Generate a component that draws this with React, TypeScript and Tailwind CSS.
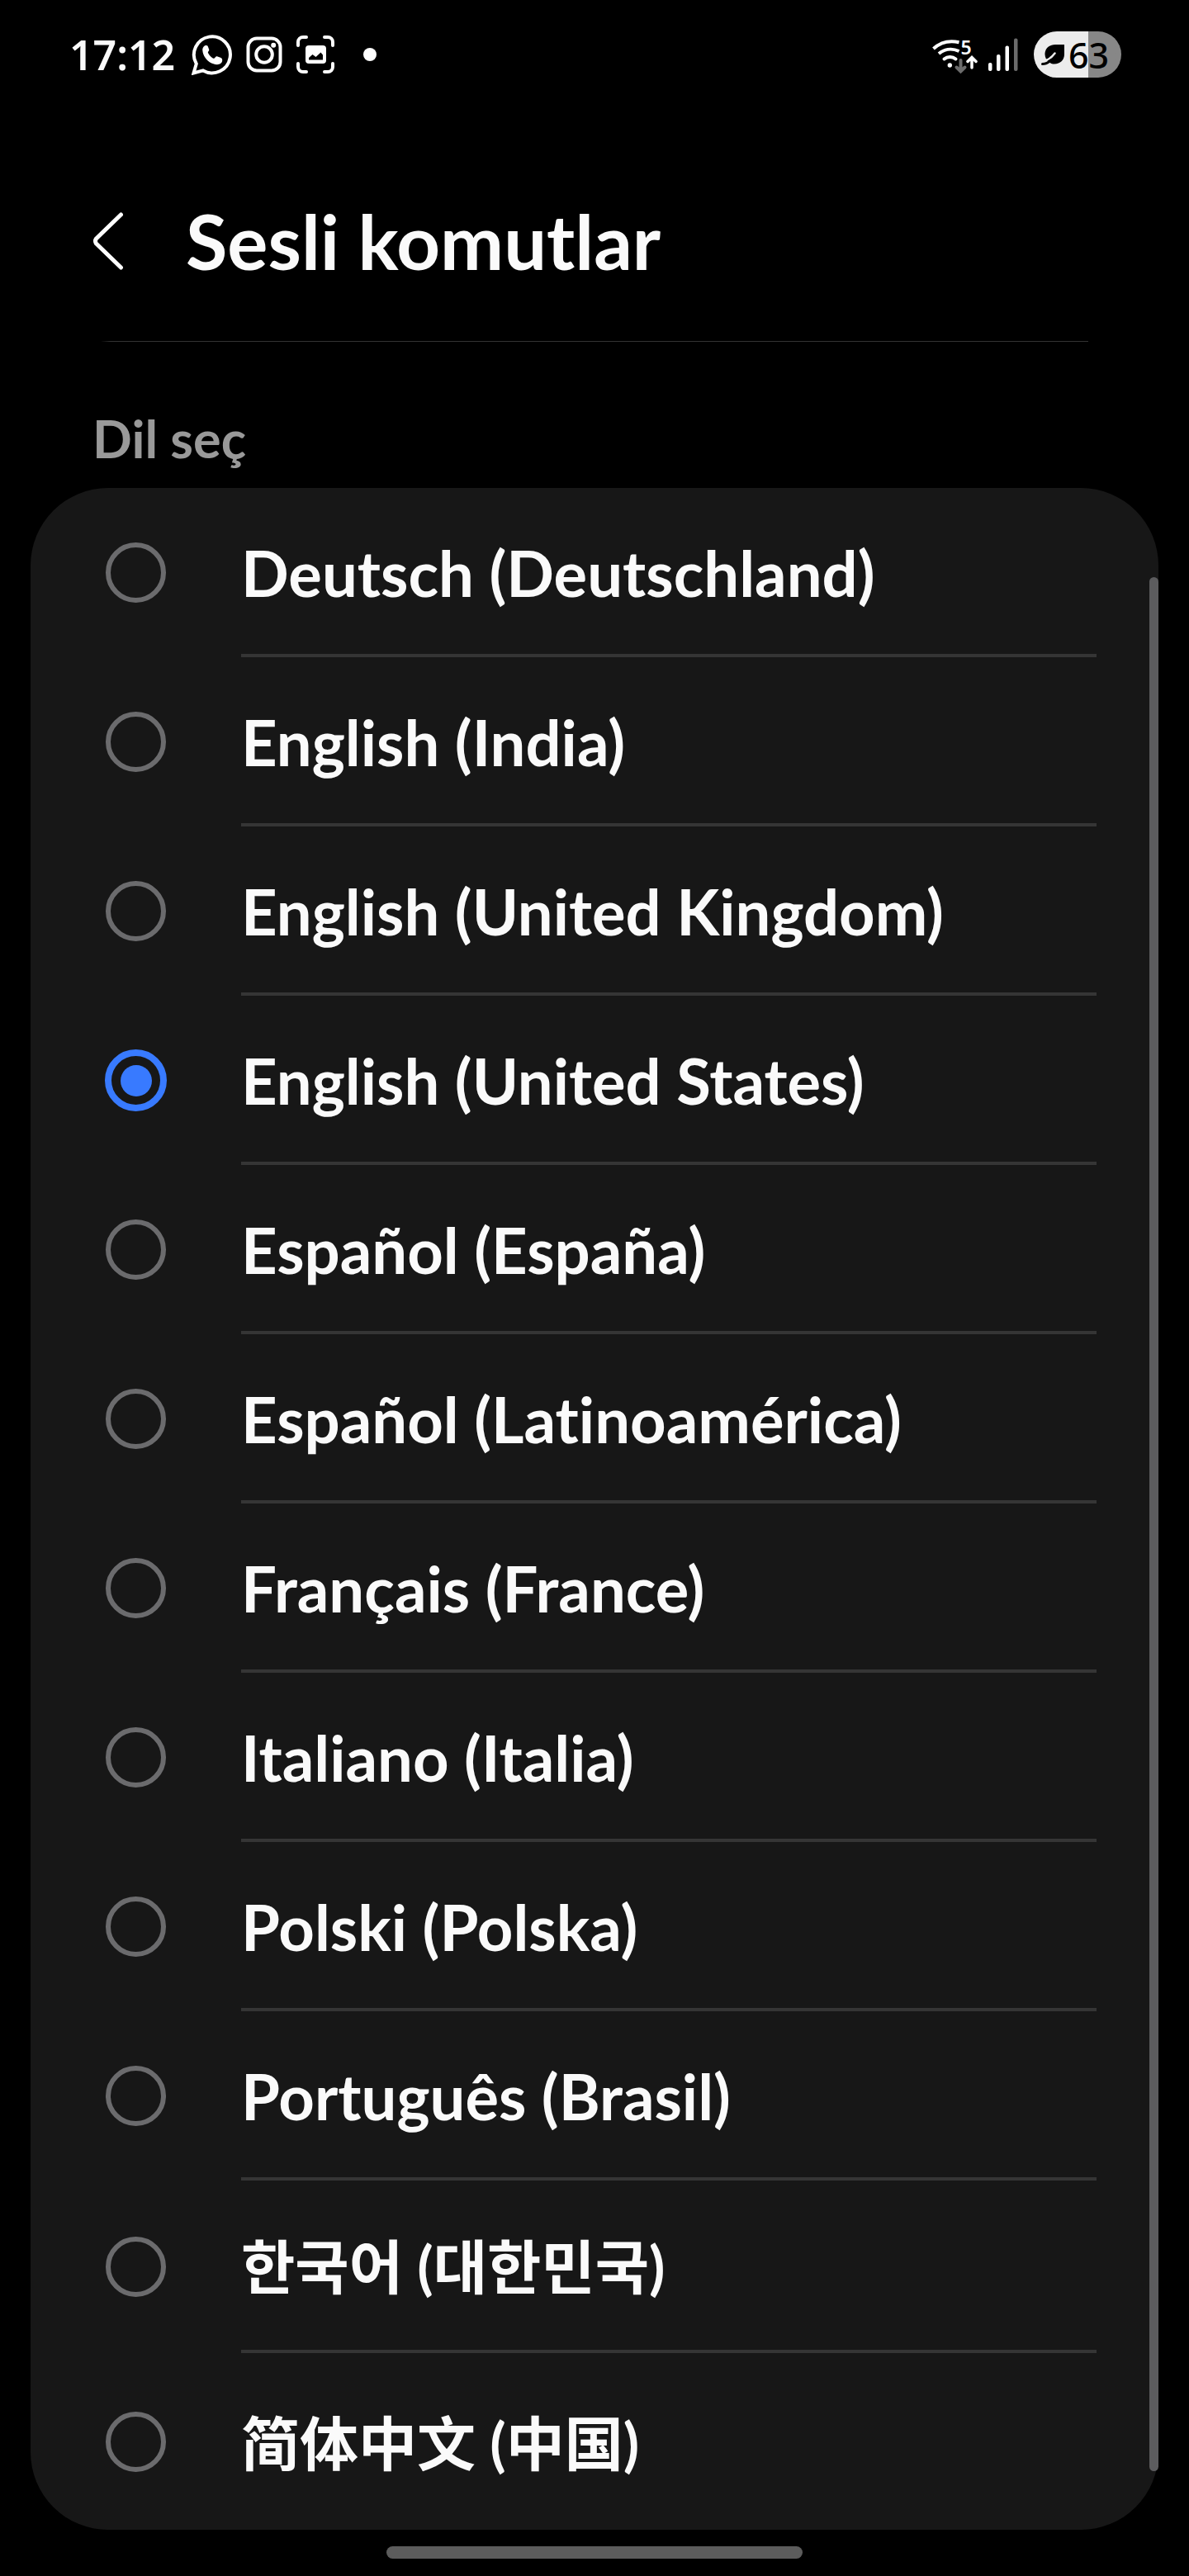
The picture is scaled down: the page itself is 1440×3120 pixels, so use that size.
import { useState } from 'react';
import clsx from 'clsx';

interface Language {
  code: string;
  label: string;
  labelClass: string;
  rowClass: string;
}

const latin = "text-[76px] font-['Lato',sans-serif]";
const row = 'h-[205px]';

const languages: Language[] = [
  { code: 'de-DE', label: 'Deutsch (Deutschland)', labelClass: latin, rowClass: row },
  { code: 'en-IN', label: 'English (India)', labelClass: latin, rowClass: row },
  { code: 'en-GB', label: 'English (United Kingdom)', labelClass: latin, rowClass: row },
  { code: 'en-US', label: 'English (United States)', labelClass: latin, rowClass: row },
  { code: 'es-ES', label: 'Español (España)', labelClass: latin, rowClass: row },
  { code: 'es-419', label: 'Español (Latinoamérica)', labelClass: latin, rowClass: row },
  { code: 'fr-FR', label: 'Français (France)', labelClass: latin, rowClass: row },
  { code: 'it-IT', label: 'Italiano (Italia)', labelClass: latin, rowClass: row },
  { code: 'pl-PL', label: 'Polski (Polska)', labelClass: latin, rowClass: row },
  { code: 'pt-BR', label: 'Português (Brasil)', labelClass: latin, rowClass: row },
  {
    code: 'ko-KR',
    label: '한국어 (대한민국)',
    labelClass: "text-[71px] font-['Lato','Noto_Sans_CJK_KR',sans-serif]",
    rowClass: 'h-[209px]',
  },
  {
    code: 'zh-CN',
    label: '简体中文 (中国)',
    labelClass: "text-[71px] font-['Lato','Noto_Sans_CJK_SC',sans-serif]",
    rowClass: 'h-[214px]',
  },
];

function WhatsAppIcon() {
  return (
    <svg viewBox="0 0 50 50" className="size-[50px]" fill="none">
      <path
        d="M2.5 47.5 L5.8 36.2 A22 22 0 1 1 14 44.4 Z"
        stroke="white"
        strokeWidth="4"
        strokeLinejoin="miter"
      />
      <path
        d="M17.5 14 C15 14 13 17 13.3 20 C14 29 22 37 31 37.2 C34 37.2 37.2 35.4 37.2 32 C37.2 30 36.6 29.6 35 28.8 L31.5 27.4 C30 26.8 29.4 27.4 28.4 28.8 C27.6 30 27 30 25.8 29.4 C23.4 28 21.4 26 20.2 23.6 C19.6 22.6 19.8 22 20.6 21 C21.4 20 21.4 19.4 21 18.4 L19.8 15.2 C19.2 14 18.6 14 17.5 14 Z"
        fill="white"
      />
    </svg>
  );
}

function InstagramIcon() {
  return (
    <svg viewBox="0 0 44 44" className="size-[44px]" fill="none" stroke="white" strokeWidth="4">
      <rect x="2.5" y="2.5" width="39" height="39" rx="10.5" />
      <circle cx="22" cy="22" r="9.8" />
      <circle cx="33.2" cy="10.8" r="3" fill="white" stroke="none" />
    </svg>
  );
}

function CaptureIcon() {
  return (
    <svg viewBox="0 0 48 48" className="size-[48px]" fill="none">
      <path
        d="M3 13 V9 A6 6 0 0 1 9 3 H13 M35 3 H39 A6 6 0 0 1 45 9 V13 M45 35 V39 A6 6 0 0 1 39 45 H35 M13 45 H9 A6 6 0 0 1 3 39 V35"
        stroke="white"
        strokeWidth="4"
        strokeLinecap="round"
      />
      <rect x="12" y="13" width="25" height="22" rx="4" fill="white" />
      <path d="M16 30.5 V28 L20.5 24 L24.5 27 L30.5 21.5 L33 24.5 V30.5 Z" fill="black" />
    </svg>
  );
}

function WifiIcon() {
  return (
    <svg viewBox="0 0 56 52" className="h-[52px] w-[56px]" fill="none" strokeWidth="4">
      <path d="M2.5 19 C10 12 21 8.5 33.5 11.2 M9 25 C15 20 24 17.5 33.5 22" stroke="white" />
      <path d="M15.5 31.5 C19.5 28 25.5 28 29.5 31.5" stroke="white" strokeLinecap="round" />
      <circle cx="22.3" cy="39" r="2.7" fill="white" />
      <text
        x="35.5"
        y="26"
        fill="white"
        className="text-[23px] font-semibold font-['Noto_Sans',sans-serif]"
      >
        5
      </text>
      <path d="M35.5 33 V46 M30.5 41.5 L35.5 46.5 L40.5 41.5" stroke="#6b6b6b" strokeLinecap="round" />
      <path
        d="M49 42 V30 M44 34.5 L49 29.5 L54 34.5"
        stroke="white"
        strokeWidth="3.5"
        strokeLinecap="round"
      />
    </svg>
  );
}

function SignalIcon() {
  return (
    <svg viewBox="0 0 38 52" className="h-[52px] w-[38px]">
      <rect x="1" y="36" width="4.5" height="10" rx="2" fill="white" />
      <rect x="11" y="26" width="4.5" height="20" rx="2" fill="white" />
      <rect x="21.5" y="15.5" width="4.5" height="30.5" rx="2" fill="white" />
      <rect x="32" y="6.5" width="4.5" height="39.5" rx="2" fill="#6b6b6b" />
    </svg>
  );
}

function LeafIcon() {
  return (
    <svg viewBox="0 0 30 28" className="h-[28px] w-[30px]" fill="none" strokeLinecap="round">
      <path
        d="M29 2 H18 C10.5 2 5.5 7 5.5 13.5 C5.5 17 7 20 9 22 C11 24 14 25.5 17 25.5 C24 25.5 29 20.5 29 14 Z"
        fill="black"
      />
      <path d="M5 21.5 Q12 20 17.5 12.5" stroke="#ececec" strokeWidth="2.5" />
      <path d="M2.5 25.5 Q8 25.5 12.5 21" stroke="black" strokeWidth="3" />
    </svg>
  );
}

function StatusBar() {
  return (
    <div className="flex h-[132px] items-center justify-between pl-[84px] pr-[82px]">
      <div className="flex items-center">
        <time className="text-[50px] leading-none font-semibold font-['Noto_Sans',sans-serif]">17:12</time>
        <div className="ml-5 flex items-center gap-4">
          <WhatsAppIcon />
          <InstagramIcon />
          <CaptureIcon />
        </div>
        <span className="ml-[34px] size-4 rounded-full bg-white" />
      </div>
      <div className="flex items-center">
        <WifiIcon />
        <div className="ml-3">
          <SignalIcon />
        </div>
        <div className="ml-[18px] flex h-[56px] w-[106px] items-center gap-1 rounded-full bg-linear-to-r from-[#ececec] from-[66px] to-[#878787] to-[66px] pl-2">
          <LeafIcon />
          <span className="text-[43px] leading-none font-medium text-black font-['Noto_Sans',sans-serif]">63</span>
        </div>
      </div>
    </div>
  );
}

export default function App() {
  const [selected, setSelected] = useState('en-US');

  return (
    <div className="flex min-h-screen flex-col bg-black text-[#fafafa] font-['Lato',sans-serif] [font-variant-ligatures:none]">
      <StatusBar />

      <header className="flex items-center gap-[75px] pt-[100px] pb-[61px] pl-[112px]">
        <button type="button" aria-label="Geri">
          <svg viewBox="0 0 38 72" className="h-[72px] w-[38px]" fill="none">
            <path
              d="M34.5 4 L4.5 33 Q2.5 36 4.5 39 L34.5 68"
              stroke="white"
              strokeWidth="5"
              strokeLinecap="round"
              strokeLinejoin="round"
            />
          </svg>
        </button>
        <h1 className="text-[92px] leading-[120px] font-bold">Sesli komutlar</h1>
      </header>
      <div className="mx-[122px] h-px bg-linear-to-r from-transparent via-[#333] via-1% to-[#333]" />

      {/* Language picker */}
      <h2 id="language-heading" className="mt-[77px] mb-5 pl-[112px] text-[63px] leading-[80px] font-bold text-[#999]">
        Dil seç
      </h2>
      <div className="relative mx-[37px]">
        <ul role="radiogroup" aria-labelledby="language-heading" className="rounded-[94px] bg-[#171717]">
          {languages.map((lang, index) => (
            <li key={lang.code}>
              <label className={clsx('flex items-center gap-[90px] pr-[75px] pl-[90px]', lang.rowClass)}>
                <span className="flex w-[75px] justify-center">
                  <input
                    type="radio"
                    name="language"
                    value={lang.code}
                    checked={selected === lang.code}
                    onChange={() => setSelected(lang.code)}
                    className="flex size-[73px] shrink-0 appearance-none items-center justify-center rounded-full border-6 border-[#6b6b6d] checked:size-[75px] checked:border-8 checked:border-[#387aff] checked:before:size-[38px] checked:before:rounded-full checked:before:bg-[#387aff]"
                  />
                </span>
                <span
                  className={clsx(
                    'flex flex-1 items-center self-stretch pt-1 font-bold',
                    lang.labelClass,
                    index < languages.length - 1 && 'border-b-4 border-[#353535]'
                  )}
                >
                  {lang.label}
                </span>
              </label>
            </li>
          ))}
        </ul>
        {/* Scroll thumb */}
        <div className="absolute top-[108px] right-0 bottom-[71px] w-[11px] rounded-full bg-[#5c5c5e]" />
      </div>

      <div className="mt-5 mb-5 h-[15px] w-[35%] self-center rounded-full bg-[#5c5c5c]" />
    </div>
  );
}
